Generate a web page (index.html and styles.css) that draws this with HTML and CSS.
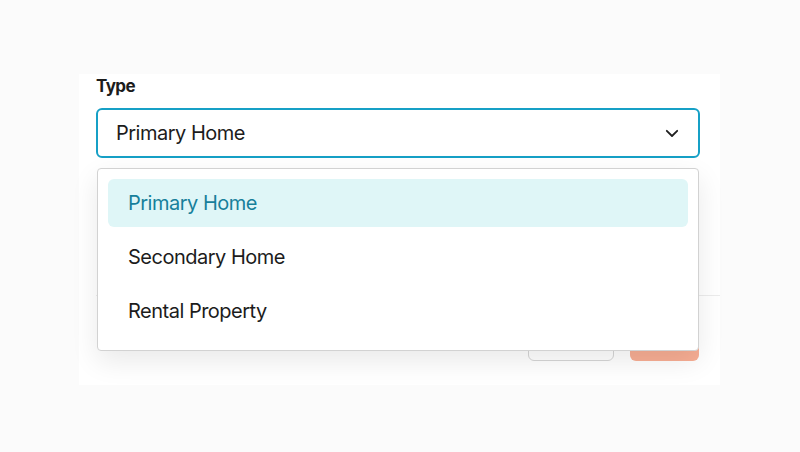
FILE: index.html
```html
<!DOCTYPE html>
<html lang="en">
<head>
<meta charset="utf-8">
<title>Type select</title>
<link rel="stylesheet" href="styles.css">
</head>
<body>
<div class="card">
  <div class="field">
    <label class="label">Type</label>
    <div class="select">
      <span class="select-value">Primary Home</span>
      <svg class="chevron" width="14" height="9" viewBox="0 0 14 9"><path d="M1.8 1.8 L7 7 L12.2 1.8" fill="none" stroke="#1f1f1f" stroke-width="1.8" stroke-linecap="round" stroke-linejoin="round"/></svg>
    </div>
    <ul class="menu">
      <li class="option active">Primary Home</li>
      <li class="option">Secondary Home</li>
      <li class="option">Rental Property</li>
    </ul>
  </div>
  <div class="divider"></div>
  <div class="footer">
    <button class="btn btn-outline">Cancel</button>
    <button class="btn btn-primary">Save</button>
  </div>
</div>
</body>
</html>
```
FILE: styles.css
```css
* { box-sizing: border-box; }
html, body { margin: 0; padding: 0; }
body {
  background: #fbfbfb;
  width: 800px;
  height: 452px;
  overflow: hidden;
  font-family: Inter, "Noto Sans", sans-serif;
  color: #1c1c1c;
  padding-top: 74px;
}
.card {
  width: 641px;
  margin-left: 79px;
  background: #fff;
  padding: 2px 20px 24px 17px;
}
.field { position: relative; }
.label {
  display: block;
  font-size: 17px;
  font-weight: 700;
  line-height: 20px;
  margin-bottom: 12px;
  letter-spacing: -0.6px;
}
.select {
  height: 50px;
  border: 2px solid #16a0c6;
  border-radius: 6px;
  display: flex;
  align-items: center;
  justify-content: space-between;
  padding: 0 19px 0 18px;
  font-size: 20px;
  letter-spacing: -0.5px;
}
.chevron { display: block; }
.menu {
  position: absolute;
  top: 92px;
  left: 1px;
  width: 602px;
  margin: 0;
  padding: 10px 10px 15px;
  list-style: none;
  background: #fff;
  border: 1px solid #d2d2d2;
  border-radius: 4px;
  box-shadow: 0 10px 28px rgba(0,0,0,0.09);
  display: flex;
  flex-direction: column;
  gap: 6px;
  z-index: 2;
}
.option {
  height: 48px;
  display: flex;
  align-items: center;
  padding-left: 20px;
  font-size: 20px;
  letter-spacing: -0.5px;
  border-radius: 6px;
}
.option.active {
  background: #dff6f7;
  color: #17809b;
}
.divider {
  height: 1px;
  background: #ececec;
  margin: 137px -20px 0 0;
}
.footer {
  display: flex;
  justify-content: flex-end;
  gap: 16px;
  padding-top: 25px;
  padding-right: 1px;
}
.btn {
  height: 40px;
  border-radius: 6px;
  font-family: inherit;
  font-size: 15px;
  color: transparent;
}
.btn-outline {
  width: 86px;
  background: #fff;
  border: 1px solid #d6d6d6;
}
.btn-primary {
  width: 69px;
  background: #f8ae94;
  border: none;
}
```
